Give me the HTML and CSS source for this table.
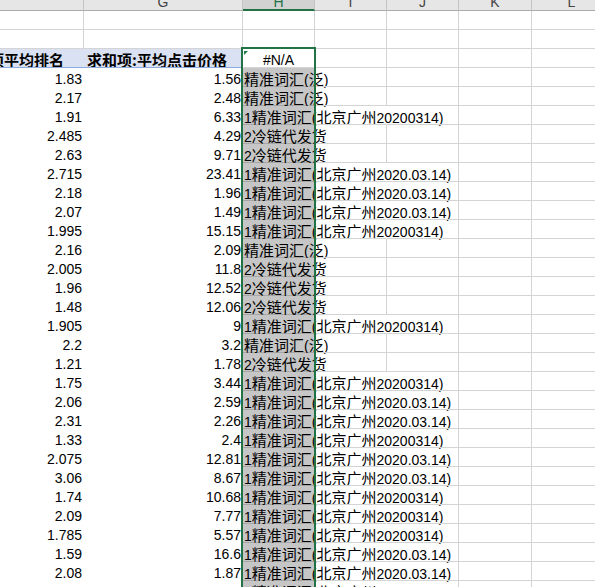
FILE: index.html
```html
<!DOCTYPE html>
<html lang="zh">
<head>
<meta charset="utf-8">
<title>Sheet</title>
<link rel="stylesheet" href="styles.css">
</head>
<body>
<div class="sheet">
  <div class="hd"><span>F</span></div><div class="hd"><span>G</span></div><div class="hd sel"><span>H</span></div><div class="hd"><span>I</span></div><div class="hd"><span>J</span></div><div class="hd"><span>K</span></div><div class="hd"><span>L</span></div>

  <div class="c"></div><div class="c"></div><div class="c"></div><div class="c"></div><div class="c"></div><div class="c"></div><div class="c"></div>
  <div class="c"></div><div class="c"></div><div class="c"></div><div class="c"></div><div class="c"></div><div class="c"></div><div class="c"></div>

  <div class="c ph phf"><span class="z">求和项:各项平均排名</span></div><div class="c ph"><span class="z">求和项:平均点击价格</span></div><div class="c act">#N/A</div><div class="c"></div><div class="c"></div><div class="c"></div><div class="c"></div>

  <div class="c n">1.83</div><div class="c n">1.56</div><div class="c hs"><span class="z">精准词汇</span>(<span class="z">泛</span>)</div><div class="c"></div><div class="c"></div><div class="c"></div><div class="c"></div>
  <div class="c n">2.17</div><div class="c n">2.48</div><div class="c hs"><span class="z">精准词汇</span>(<span class="z">泛</span>)</div><div class="c"></div><div class="c"></div><div class="c"></div><div class="c"></div>
  <div class="c n">1.91</div><div class="c n">6.33</div><div class="c hs">1<span class="z">精准词汇</span>(<span class="z">北京广州</span>20200314)</div><div class="c open"></div><div class="c"></div><div class="c"></div><div class="c"></div>
  <div class="c n">2.485</div><div class="c n">4.29</div><div class="c hs">2<span class="z">冷链代发货</span></div><div class="c"></div><div class="c"></div><div class="c"></div><div class="c"></div>
  <div class="c n">2.63</div><div class="c n">9.71</div><div class="c hs">2<span class="z">冷链代发货</span></div><div class="c"></div><div class="c"></div><div class="c"></div><div class="c"></div>
  <div class="c n">2.715</div><div class="c n">23.41</div><div class="c hs">1<span class="z">精准词汇</span>(<span class="z">北京广州</span>2020.03.14)</div><div class="c open"></div><div class="c"></div><div class="c"></div><div class="c"></div>
  <div class="c n">2.18</div><div class="c n">1.96</div><div class="c hs">1<span class="z">精准词汇</span>(<span class="z">北京广州</span>2020.03.14)</div><div class="c open"></div><div class="c"></div><div class="c"></div><div class="c"></div>
  <div class="c n">2.07</div><div class="c n">1.49</div><div class="c hs">1<span class="z">精准词汇</span>(<span class="z">北京广州</span>2020.03.14)</div><div class="c open"></div><div class="c"></div><div class="c"></div><div class="c"></div>
  <div class="c n">1.995</div><div class="c n">15.15</div><div class="c hs">1<span class="z">精准词汇</span>(<span class="z">北京广州</span>20200314)</div><div class="c open"></div><div class="c"></div><div class="c"></div><div class="c"></div>
  <div class="c n">2.16</div><div class="c n">2.09</div><div class="c hs"><span class="z">精准词汇</span>(<span class="z">泛</span>)</div><div class="c"></div><div class="c"></div><div class="c"></div><div class="c"></div>
  <div class="c n">2.005</div><div class="c n">11.8</div><div class="c hs">2<span class="z">冷链代发货</span></div><div class="c"></div><div class="c"></div><div class="c"></div><div class="c"></div>
  <div class="c n">1.96</div><div class="c n">12.52</div><div class="c hs">2<span class="z">冷链代发货</span></div><div class="c"></div><div class="c"></div><div class="c"></div><div class="c"></div>
  <div class="c n">1.48</div><div class="c n">12.06</div><div class="c hs">2<span class="z">冷链代发货</span></div><div class="c"></div><div class="c"></div><div class="c"></div><div class="c"></div>
  <div class="c n">1.905</div><div class="c n">9</div><div class="c hs">1<span class="z">精准词汇</span>(<span class="z">北京广州</span>20200314)</div><div class="c open"></div><div class="c"></div><div class="c"></div><div class="c"></div>
  <div class="c n">2.2</div><div class="c n">3.2</div><div class="c hs"><span class="z">精准词汇</span>(<span class="z">泛</span>)</div><div class="c"></div><div class="c"></div><div class="c"></div><div class="c"></div>
  <div class="c n">1.21</div><div class="c n">1.78</div><div class="c hs">2<span class="z">冷链代发货</span></div><div class="c"></div><div class="c"></div><div class="c"></div><div class="c"></div>
  <div class="c n">1.75</div><div class="c n">3.44</div><div class="c hs">1<span class="z">精准词汇</span>(<span class="z">北京广州</span>20200314)</div><div class="c open"></div><div class="c"></div><div class="c"></div><div class="c"></div>
  <div class="c n">2.06</div><div class="c n">2.59</div><div class="c hs">1<span class="z">精准词汇</span>(<span class="z">北京广州</span>2020.03.14)</div><div class="c open"></div><div class="c"></div><div class="c"></div><div class="c"></div>
  <div class="c n">2.31</div><div class="c n">2.26</div><div class="c hs">1<span class="z">精准词汇</span>(<span class="z">北京广州</span>2020.03.14)</div><div class="c open"></div><div class="c"></div><div class="c"></div><div class="c"></div>
  <div class="c n">1.33</div><div class="c n">2.4</div><div class="c hs">1<span class="z">精准词汇</span>(<span class="z">北京广州</span>20200314)</div><div class="c open"></div><div class="c"></div><div class="c"></div><div class="c"></div>
  <div class="c n">2.075</div><div class="c n">12.81</div><div class="c hs">1<span class="z">精准词汇</span>(<span class="z">北京广州</span>2020.03.14)</div><div class="c open"></div><div class="c"></div><div class="c"></div><div class="c"></div>
  <div class="c n">3.06</div><div class="c n">8.67</div><div class="c hs">1<span class="z">精准词汇</span>(<span class="z">北京广州</span>2020.03.14)</div><div class="c open"></div><div class="c"></div><div class="c"></div><div class="c"></div>
  <div class="c n">1.74</div><div class="c n">10.68</div><div class="c hs">1<span class="z">精准词汇</span>(<span class="z">北京广州</span>20200314)</div><div class="c open"></div><div class="c"></div><div class="c"></div><div class="c"></div>
  <div class="c n">2.09</div><div class="c n">7.77</div><div class="c hs">1<span class="z">精准词汇</span>(<span class="z">北京广州</span>20200314)</div><div class="c open"></div><div class="c"></div><div class="c"></div><div class="c"></div>
  <div class="c n">1.785</div><div class="c n">5.57</div><div class="c hs">1<span class="z">精准词汇</span>(<span class="z">北京广州</span>20200314)</div><div class="c open"></div><div class="c"></div><div class="c"></div><div class="c"></div>
  <div class="c n">1.59</div><div class="c n">16.6</div><div class="c hs">1<span class="z">精准词汇</span>(<span class="z">北京广州</span>2020.03.14)</div><div class="c open"></div><div class="c"></div><div class="c"></div><div class="c"></div>
  <div class="c n">2.08</div><div class="c n">1.87</div><div class="c hs">1<span class="z">精准词汇</span>(<span class="z">北京广州</span>2020.03.14)</div><div class="c open"></div><div class="c"></div><div class="c"></div><div class="c"></div>
  <div class="c n">1.75</div><div class="c n">14.69</div><div class="c hs">1<span class="z">精准词汇</span>(<span class="z">北京广州</span>20200314)</div><div class="c open"></div><div class="c"></div><div class="c"></div><div class="c"></div>
</div>
<div class="selbox"></div>
</body>
</html>
```

FILE: styles.css
```css
html, body {
  margin: 0;
  padding: 0;
  background: #ffffff;
}

body {
  position: relative;
  width: 595px;
  height: 587px;
  overflow: hidden;
  font-family: "Liberation Sans", "Noto Sans CJK SC", sans-serif;
  font-size: 14px;
  color: #000000;
}

.sheet {
  display: grid;
  grid-template-columns: 200px 159px 72px 72px 72px 73px 80px;
  grid-template-rows: 11px;
  grid-auto-rows: 19px;
  margin-left: -116px;
}

.hd {
  box-sizing: border-box;
  height: 11px;
  overflow: hidden;
  background: #e6e6e6;
  border-right: 1px solid #c4c4c4;
  border-bottom: 1px solid #ababab;
  text-align: center;
  color: #444444;
  font-size: 14px;
  line-height: 14px;
}

.hd span {
  display: block;
  margin-top: -5px;
}

.hd.sel {
  background: #d2d2d2;
  border-bottom: 2px solid #217346;
  color: #217346;
}

.c {
  box-sizing: border-box;
  border-right: 1px solid #d4d4d4;
  border-bottom: 1px solid #d4d4d4;
  padding: 3px 2px 0 2px;
  line-height: 16px;
  white-space: nowrap;
}

.z {
  font-family: "Noto Sans CJK SC", sans-serif;
  font-size: 15px;
}

.c.n {
  border: none;
  text-align: right;
  padding-right: 2px;
}

.c.ph {
  background: #d9e1f2;
  border-right: none;
  border-bottom: 1px solid #8ea9db;
  font-weight: bold;
  padding-left: 3px;
  overflow: hidden;
}

.c.phf {
  text-align: right;
  padding-right: 20px;
}

.c.act {
  position: relative;
  text-align: center;
  background: #ffffff;
}

.c.act::before {
  content: "";
  position: absolute;
  left: 1px;
  top: 2px;
  width: 0;
  height: 0;
  border-top: 4px solid #1f7a45;
  border-right: 4px solid transparent;
}

.c.hs {
  background: #c6c6c6;
  border-bottom: 1px solid #a6a6a6;
  padding-left: 1px;
  overflow: visible;
}

.c.open {
  border-right-color: transparent;
}

.selbox {
  position: absolute;
  left: 241px;
  top: 47px;
  width: 75px;
  height: 560px;
  box-sizing: border-box;
  border: 2px solid #217346;
}
```
